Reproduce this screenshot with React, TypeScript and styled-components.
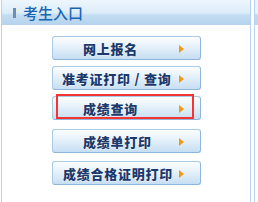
import styled, { createGlobalStyle } from 'styled-components';

const GlobalStyle = createGlobalStyle`
  body {
    margin: 0;
    background: #fff;
    font-family: "Noto Sans CJK SC", "Liberation Sans", sans-serif;
  }
`;

interface ButtonProps {
  indent: number;
}

const items = [
  { label: '网上报名', indent: 30, gap: 0 },
  { label: '准考证打印 / 查询', indent: 9, gap: 6 },
  { label: '成绩查询', indent: 30, gap: 6, marked: true },
  { label: '成绩单打印', indent: 30, gap: 9 },
  { label: '成绩合格证明打印', indent: 10, gap: 8 },
];

const App = () => {
  return (
    <>
      <GlobalStyle />
      <Page>
        <Panel>
          <Header>
            <Mark />
            <Title>考生入口</Title>
          </Header>
          <List>
            {items.map((item) => (
              <Entry key={item.label} style={{ marginTop: item.gap }}>
                <LinkButton indent={item.indent}>
                  <Label>{item.label}</Label>
                  <Arrow />
                </LinkButton>
                {item.marked && <Highlight />}
              </Entry>
            ))}
          </List>
        </Panel>
        <SidePanel />
      </Page>
    </>
  );
};

export default App;

// Styles
const Page = styled.div`
  display: flex;
  gap: 3px;
  height: 202px;
  padding-left: 1px;
  overflow: hidden;
`;

const Panel = styled.div`
  width: 250px;
  height: 220px;
  border-left: 1px solid #b7d3ec;
  border-right: 1px solid #b7d3ec;
  box-sizing: border-box;
  flex-shrink: 0;
`;

const SidePanel = styled.div`
  flex: 1;
  height: 220px;
  border-left: 1px solid #b7d3ec;
  background: linear-gradient(#eaf4fc 0, #eaf4fc 13px, #c2dbf1 15px, #bcd7ef 25px, #fff 25px);
`;

const Header = styled.div`
  height: 25px;
  display: flex;
  align-items: center;
  padding-left: 11px;
  background: linear-gradient(#eef6fd 0, #dcecf9 13px, #c3ddf2 15px, #b5d3ee 25px);
`;

const Mark = styled.span`
  width: 3px;
  height: 10px;
  background: #6a8fb4;
  margin-right: 7px;
`;

const Title = styled.span`
  font-size: 15px;
  font-weight: 500;
  color: #1865b3;
  line-height: 1;
`;

const List = styled.div`
  display: flex;
  flex-direction: column;
  padding: 11px 0 0 50px;
`;

const Entry = styled.div`
  position: relative;
  width: 149px;
`;

const LinkButton = styled.div<ButtonProps>`
  height: 24px;
  box-sizing: border-box;
  display: flex;
  align-items: center;
  padding-left: ${(p) => p.indent}px;
  border: 1px solid #a9cbe6;
  border-right-color: #8fb6da;
  border-bottom-color: #8fb6da;
  border-radius: 3px;
  background: linear-gradient(#fbfdff 0%, #e8f2fb 40%, #c6def2 100%);
  position: relative;
`;

const Label = styled.span`
  font-size: 13px;
  font-weight: 900;
  letter-spacing: 0.75px;
  color: #1a3a6e;
  line-height: 1;
  text-shadow: 0 0 2px #fff, 0 0 1px #fff;
`;

const Arrow = styled.span`
  position: absolute;
  right: 16px;
  top: 8px;
  width: 0;
  height: 0;
  border-top: 4px solid transparent;
  border-bottom: 4px solid transparent;
  border-left: 5px solid #f49a0c;
`;

const Highlight = styled.div`
  position: absolute;
  left: 4px;
  top: -2px;
  width: 138px;
  height: 25px;
  box-sizing: border-box;
  border: 2px solid #f53434;
`;
